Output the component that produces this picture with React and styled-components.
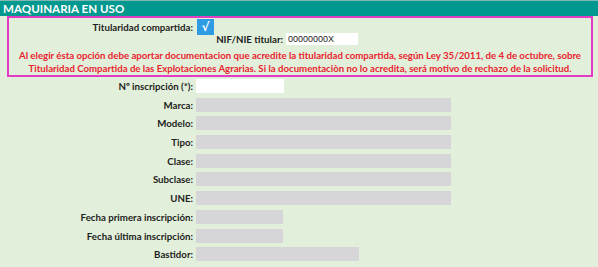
import React from "react";
import styled, { createGlobalStyle } from "styled-components";

const Global = createGlobalStyle`
  html, body { margin: 0; padding: 0; background: #e2efda; }
  body { font-family: Lato, "Liberation Sans", sans-serif; }
`;

const Page = styled.div`
  width: 598px;
  height: 267px;
  background: #e2efda;
  overflow: hidden;
`;

const Header = styled.div`
  height: 15px;
  background: #00988f;
  border-top: 1px solid #7fb8b2;
  color: #fff;
  font-weight: 700;
  font-size: 11.6px;
  line-height: 15px;
  padding-left: 3px;
`;

const Notice = styled.div`
  margin: 0 5px 0 7px;
  height: 57px;
  border: 2px solid #e23cc4;
  display: flex;
  flex-direction: column;
`;

const Line = styled.div`
  display: flex;
  align-items: center;
  height: ${(p) => p.h}px;
  margin-top: ${(p) => p.mt || 0}px;
`;

const Label = styled.div`
  width: ${(p) => p.w}px;
  flex: none;
  text-align: right;
  font-weight: 700;
  font-size: 9.7px;
  color: #1d1d1d;
  white-space: nowrap;
`;

const Check = styled.div`
  width: 17px;
  height: 16px;
  margin-left: 4px;
  background: #2f9be3;
  color: #fff;
  font-family: "DejaVu Sans", sans-serif;
  font-weight: 700;
  font-size: 12px;
  line-height: 16px;
  text-align: center;
`;

const TextInput = styled.div`
  width: ${(p) => p.w}px;
  height: ${(p) => p.h}px;
  margin-left: ${(p) => p.ml || 3}px;
  background: #fff;
  font-size: 9px;
  line-height: ${(p) => p.h}px;
  padding-left: 2px;
  box-sizing: border-box;
  color: #222;
  font-family: "Liberation Sans", Arial, sans-serif;
`;

const Warning = styled.div`
  text-align: center;
  color: #e8232f;
  font-weight: 700;
  font-size: 9.65px;
  line-height: 13px;
  margin-top: 4px;
  white-space: nowrap;
`;

const Form = styled.div`
  display: flex;
  flex-direction: column;
  gap: 4.7px;
  margin-top: 2px;
`;

const Field = styled.div`
  width: ${(p) => p.w}px;
  height: 14px;
  margin-left: 3px;
  background: ${(p) => (p.white ? "#ffffff" : "#d6d6d8")};
`;

const Row = styled.div`
  display: flex;
  align-items: center;
  height: 14px;
`;

const rows = [
  ["Nº inscripción (*):", 88, true],
  ["Marca:", 255],
  ["Modelo:", 255],
  ["Tipo:", 255],
  ["Clase:", 255],
  ["Subclase:", 255],
  ["UNE:", 255],
  ["Fecha primera inscripción:", 87],
  ["Fecha última inscripción:", 87],
  ["Bastidor:", 163],
];

export default function App() {
  return (
    <>
      <Global />
      <Page>
        <Header>MAQUINARIA EN USO</Header>
        <Notice>
          <Line h={16} mt={1}>
            <Label w={184}>Titularidad compartida:</Label>
            <Check>√</Check>
          </Line>
          <Line h={12} mt={-2}>
            <Label w={274}>NIF/NIE titular:</Label>
            <TextInput w={72} h={12}>00000000X</TextInput>
          </Line>
          <Warning>
            Al elegir ésta opción debe aportar documentacion que acredite la titularidad compartida, según Ley 35/2011, de 4 de octubre, sobre
            <br />
            Titularidad Compartida de las Explotaciones Agrarias. Si la documentaciòn no lo acredita, será motivo de rechazo de la solicitud.
          </Warning>
        </Notice>
        <Form>
          {rows.map(([label, w, white]) => (
            <Row key={label}>
              <Label w={193}>{label}</Label>
              <Field w={w} white={white} />
            </Row>
          ))}
        </Form>
      </Page>
    </>
  );
}
